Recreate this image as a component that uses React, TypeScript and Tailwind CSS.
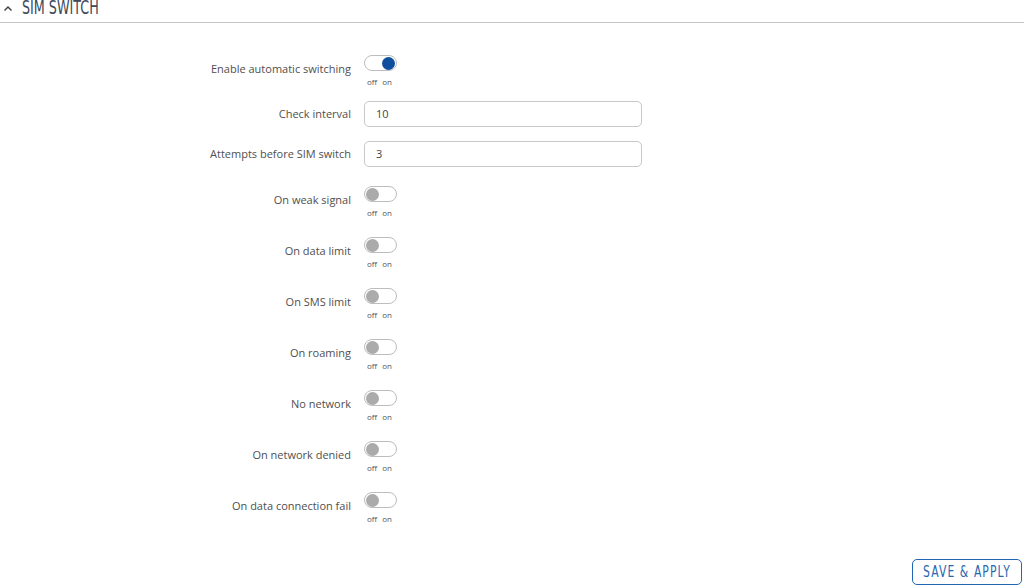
import React from 'react';

const toggles = [
  'On weak signal',
  'On data limit',
  'On SMS limit',
  'On roaming',
  'No network',
  'On network denied',
  'On data connection fail',
];

function Toggle({ on }: { on?: boolean }) {
  return (
    <div className="flex flex-col">
      <div
        className={`w-[33px] h-[16px] rounded-full border border-[#bdbdbd] bg-white flex items-center px-[1px] ${
          on ? 'justify-end' : 'justify-start'
        }`}
      >
        <div className={`w-[13px] h-[13px] rounded-full ${on ? 'bg-[#0d4f9e]' : 'bg-[#ababab]'}`} />
      </div>
      <div className="flex gap-[5px] pl-[3px] mt-[6px] text-[8px] leading-[10px] text-[#555]">
        <span>off</span>
        <span>on</span>
      </div>
    </div>
  );
}

function Row({ label, children, labelPt, className }: { label: string; children: React.ReactNode; labelPt: string; className?: string }) {
  return (
    <div className={`flex items-start gap-[13px] ${className ?? ''}`}>
      <div className={`w-[351px] text-right text-[11px] leading-[16px] text-[#4f4f4f] ${labelPt}`}>{label}</div>
      {children}
    </div>
  );
}

function Input({ value }: { value: string }) {
  return (
    <div className="w-[278px] h-[26px] rounded-[5px] border border-[#c8c8c8] bg-white flex items-center px-[11px] text-[11px] text-[#444]">
      {value}
    </div>
  );
}

export default function App() {
  return (
    <div className="w-[1024px] h-[586px] bg-white overflow-hidden relative" style={{ fontFamily: '"Open Sans", "Noto Sans", sans-serif' }}>
      <div className="h-[23px] border-b border-[#c4c4c4] flex items-start overflow-hidden">
        <svg width="10" height="8" viewBox="0 0 10 8" className="ml-[3px] mt-[4px]">
          <path d="M1.5 6.5 L5 3 L8.5 6.5" fill="none" stroke="#444" strokeWidth="1.5" />
        </svg>
        <span
          className="inline-block origin-left scale-x-[0.67] ml-[9px] -mt-[4px] text-[19px] leading-[22px] text-[#3b4a5a] whitespace-nowrap"
          style={{ fontFamily: '"DejaVu Sans", sans-serif' }}
        >
          SIM SWITCH
        </span>
      </div>

      <div className="pt-[32px]">
        <Row label="Enable automatic switching" labelPt="pt-[6px]">
          <Toggle on />
        </Row>
        <Row label="Check interval" labelPt="pt-[5px]" className="mt-[14px]">
          <Input value="10" />
        </Row>
        <Row label="Attempts before SIM switch" labelPt="pt-[5px]" className="mt-[14px]">
          <Input value="3" />
        </Row>
        {toggles.map((t) => (
          <Row key={t} label={t} labelPt="pt-[6px]" className="mt-[19px]">
            <Toggle />
          </Row>
        ))}
      </div>

      <div className="absolute right-[2px] bottom-[1px]">
        <button className="w-[110px] h-[26px] rounded-[5px] border-[1.5px] border-[#2066b3] bg-white flex items-center justify-center overflow-hidden">
          <span
            className="inline-block scale-x-[0.72] text-[#2a67b0] text-[15px] leading-[18px] tracking-[1.5px] whitespace-nowrap"
            style={{ fontFamily: '"DejaVu Sans", sans-serif' }}
          >
            SAVE &amp; APPLY
          </span>
        </button>
      </div>
    </div>
  );
}
